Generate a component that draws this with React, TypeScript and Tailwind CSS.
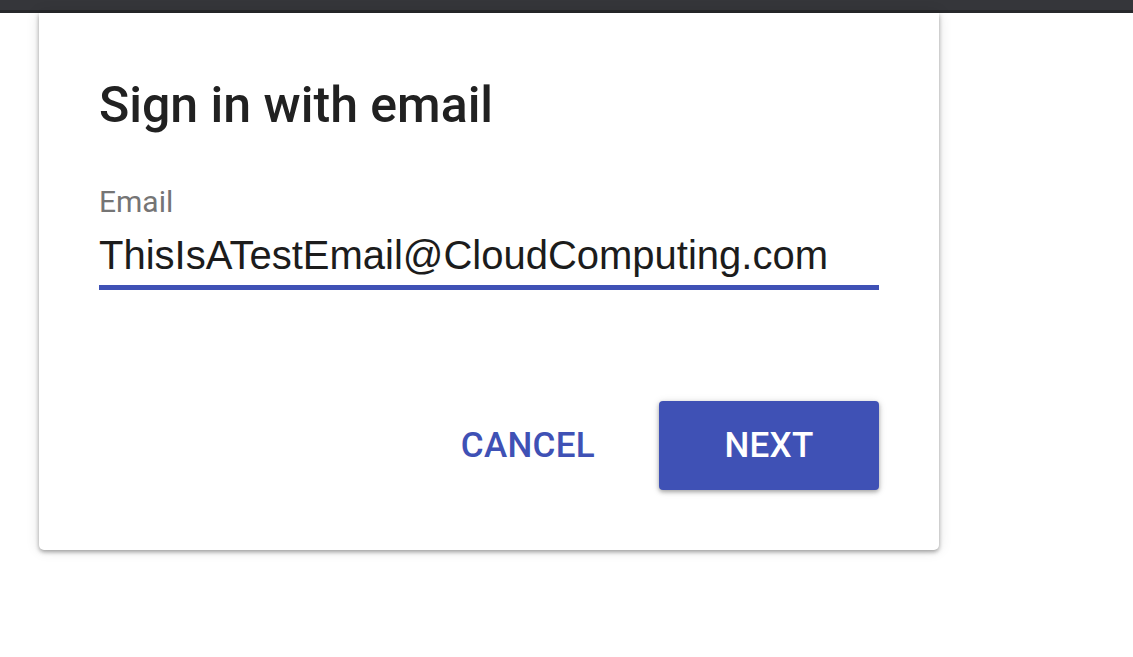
import React from "react";

export default function App() {
  return (
    <div className="w-[1133px] h-[657px] bg-white overflow-hidden" style={{ fontFamily: "Roboto, 'Liberation Sans', sans-serif" }}>
      <div className="h-[13px] bg-[#35363a] border-b-[3px] border-[#28292c]" />
      <div className="pl-[39px]">
        <div className="w-[900px] bg-white rounded-b-[5px] shadow-[0_2px_4px_rgba(0,0,0,0.35),0_0_14px_rgba(0,0,0,0.12)] px-[60px] pt-[64px] pb-[60px]">
          <h1 className="text-[50px] leading-[56px] font-medium text-[#212121] font-['Roboto',sans-serif]">
            Sign in with email
          </h1>
          <div className="mt-[52px] text-[30px] leading-[34px] text-[#757575]">Email</div>
          <div className="mt-[13px] pb-[7px] border-b-[5px] border-[#3f51b5]">
            <div className="text-[40px] leading-[46px] text-[#1c1c1c] font-['Liberation_Sans',Arial,sans-serif]">
              ThisIsATestEmail@CloudComputing.com
            </div>
          </div>
          <div className="mt-[111px] flex justify-end items-center gap-[32px]">
            <button className="h-[89px] px-[32px] pt-[2px] text-[35px] font-medium text-[#3f51b5] tracking-[0.3px]">
              CANCEL
            </button>
            <button className="h-[89px] w-[220px] pt-[2px] rounded-[4px] bg-[#3f51b5] text-white text-[35px] font-medium tracking-[0.3px] shadow-[0_2px_4px_rgba(0,0,0,0.3),0_1px_8px_rgba(0,0,0,0.12)]">
              NEXT
            </button>
          </div>
        </div>
      </div>
    </div>
  );
}
